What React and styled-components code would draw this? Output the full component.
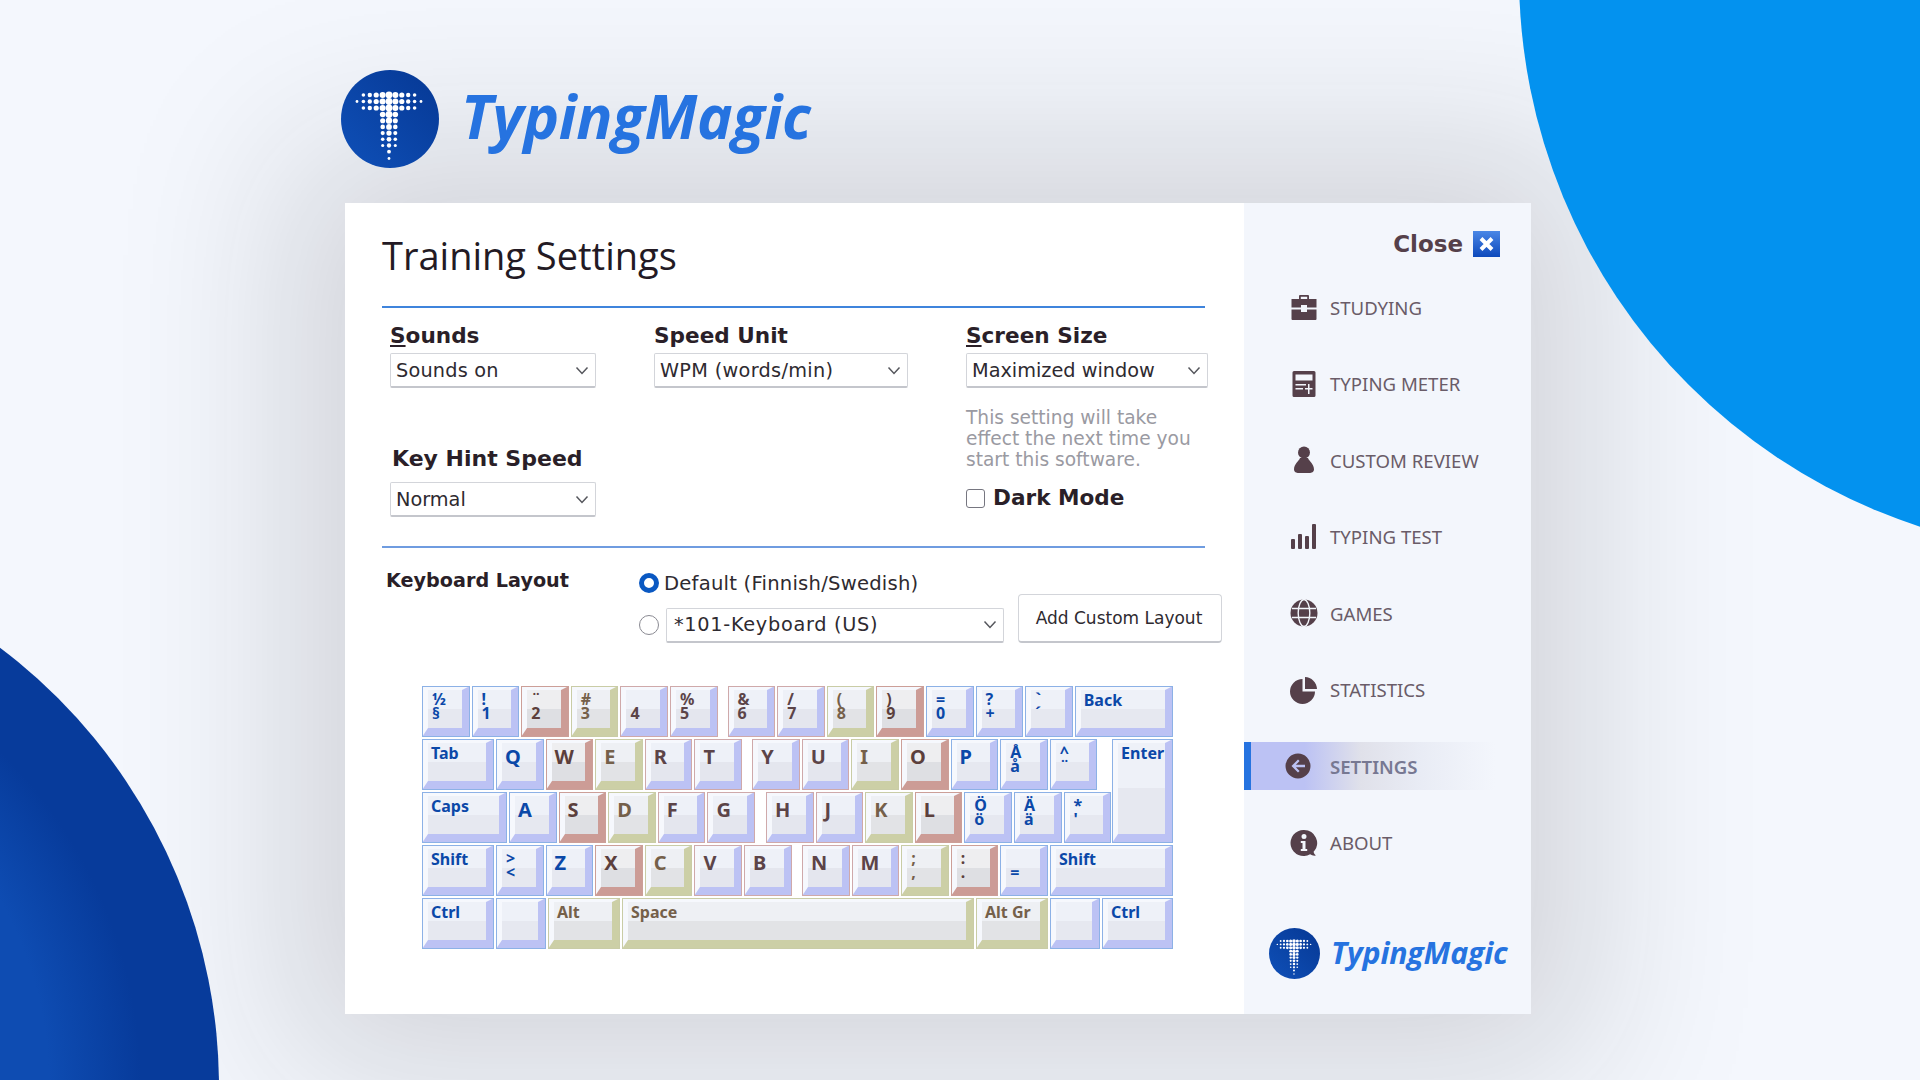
import React from 'react';
import styled, { createGlobalStyle } from 'styled-components';

const GlobalStyle = createGlobalStyle`
  html, body {
    margin: 0;
    padding: 0;
    width: 1920px;
    height: 1080px;
    overflow: hidden;
    background: #f4f7fd;
    font-family: "DejaVu Sans", "Liberation Sans", sans-serif;
  }
  * { box-sizing: border-box; }
`;

const Page = styled.div`
  position: relative;
  width: 1920px;
  height: 1080px;
  overflow: hidden;
  padding: 70px 0 0 341px;
`;

const TopCircle = styled.div`
  position: absolute;
  left: 1519px;
  top: -605px;
  width: 1160px;
  height: 1160px;
  border-radius: 50%;
  background: #0392ef;
`;

const BottomCircle = styled.div`
  position: absolute;
  left: -881px;
  top: 537px;
  width: 1100px;
  height: 1100px;
  border-radius: 50%;
  background: radial-gradient(circle closest-side, #0e4cb2 0, #0e4cb2 380px, #073b9b 472px, #073b9b 100%);
`;

const Brand = styled.header`
  display: flex;
  align-items: center;
  gap: ${p => p.$gap}px;
`;

const BrandName = styled.span`
  margin-top: ${p => p.$lift}px;
  font-family: "Open Sans", "Noto Sans", sans-serif;
  font-style: italic;
  font-weight: 700;
  font-size: ${p => p.$size}px;
  letter-spacing: ${p => p.$spacing}px;
  line-height: 1;
  color: #2673e0;
`;

const Panel = styled.main`
  display: flex;
  width: 1186px;
  height: 811px;
  margin: 35px 0 0 4px;
  background: #fff;
  box-shadow: 0 0 160px 60px rgba(30, 25, 30, 0.15);
`;

const Content = styled.section`
  width: 899px;
  padding: 26px 0 0 37px;
`;

const Title = styled.h1`
  margin: 0;
  height: 77px;
  font-family: "Open Sans", "Noto Sans", sans-serif;
  font-weight: 400;
  font-size: 38px;
  line-height: 52px;
  color: #231a24;
`;

const Rule = styled.hr`
  width: 823px;
  height: 2px;
  margin: 0;
  border: 0;
  background: ${p => p.$color};
`;

const SettingsGrid = styled.div`
  display: grid;
  grid-template-columns: 264px 312px 241px;
  height: 238px;
  padding: 15px 0 0 8px;
`;

const Field = styled.div`
  display: flex;
  flex-direction: column;
  align-items: flex-start;
`;

const Label = styled.label`
  display: block;
  margin: ${p => p.$top || 0}px 0 ${p => (p.$bottom === undefined ? 4 : p.$bottom)}px ${p => p.$left || 0}px;
  font-weight: 700;
  font-size: ${p => p.$size || 21.6}px;
  line-height: 26px;
  color: #2a1f28;
  u { text-underline-offset: 2px; text-decoration-thickness: 2px; }
`;

const SelectBox = styled.div`
  display: flex;
  align-items: center;
  justify-content: space-between;
  width: ${p => p.$w}px;
  height: 35px;
  padding: 0 6px 0 ${p => p.$pad || 5}px;
  background: #fff;
  border: 1px solid #d3d5da;
  border-bottom: 2px solid #c4c6cc;
  border-radius: 2px;
  font-size: 19.3px;
  letter-spacing: ${p => p.$spacing || 0}px;
  color: #2e2a30;
  white-space: nowrap;
`;

const Chevron = styled.svg`
  width: 14px;
  height: 9px;
  fill: none;
  stroke: #55565c;
  stroke-width: 1.5;
`;

const Hint = styled.p`
  width: 241px;
  margin: 19px 0 15px;
  font-size: 18.6px;
  line-height: 21px;
  color: #9a9aa2;
`;

const CheckRow = styled.div`
  display: flex;
  align-items: center;
  gap: 8px;
`;

const CheckBox = styled.span`
  width: 19px;
  height: 19px;
  background: #fff;
  border: 1.5px solid #767680;
  border-radius: 3px;
`;

const LayoutRow = styled.div`
  display: flex;
  align-items: flex-end;
  margin-top: 23px;
  padding-left: 4px;
`;

const LayoutLabelCol = styled.div`
  align-self: flex-start;
  width: 253px;
`;

const LayoutChoices = styled.div`
  display: flex;
  flex-direction: column;
  gap: 12px;
  width: 365px;
`;

const RadioRow = styled.div`
  display: flex;
  align-items: center;
  gap: ${p => p.$gap}px;
  height: ${p => p.$h}px;
  font-size: 19.6px;
  letter-spacing: 0.22px;
  color: #2e2a30;
`;

const Radio = styled.span`
  flex: none;
  width: 20px;
  height: 20px;
  border-radius: 50%;
  background: #fff;
  border: ${p => (p.$on ? '5.5px solid #0a58c2' : '1.5px solid #8a8a92')};
`;

const AddButton = styled.button`
  width: 204px;
  height: 49px;
  margin-left: 14px;
  padding: 0 2px 0 0;
  background: #fff;
  border: 1px solid #d3d5da;
  border-bottom: 2px solid #c4c6cc;
  border-radius: 4px;
  font-family: inherit;
  font-size: 17px;
  color: #2e2a30;
`;

const Keyboard = styled.div`
  display: flex;
  flex-direction: column;
  gap: 2px;
  margin: 43px 0 0 40px;
`;

const KeyRow = styled.div`
  display: flex;
  gap: 2px;
  height: 51px;
`;

const tones = {
  blue: { line: '#8cb1e6', side: '#bcc2f4', text: '#0b48a8', soft: '#eef1f8', low: '#e6e8f0' },
  mixed: { line: '#cfa9aa', side: '#bcc2f4', text: '#5c4448', soft: '#eef1f8', low: '#e4e6ee' },
  pink: { line: '#cc9f98', side: '#cc9c96', text: '#5c3f3c', soft: '#eeeef0', low: '#dedfe3' },
  olive: { line: '#c9cca6', side: '#cccfa6', text: '#75604a', soft: '#eef0f4', low: '#e2e3e6' },
};

const Key = styled.div`
  flex: none;
  width: ${p => p.$w || 47.6}px;
  height: ${p => p.$h || 51}px;
  margin-left: ${p => p.$skip || 0}px;
  padding: 0 0 0 3px;
  border-style: solid;
  border-width: 4px 8px 9px 6px;
  border-color: #f6f8fd ${p => tones[p.$tone].side} ${p => tones[p.$tone].side} #f6f8fd;
  outline: 1px solid ${p => tones[p.$tone].line};
  outline-offset: -1px;
  background: linear-gradient(${p => tones[p.$tone].soft} 50%, ${p => tones[p.$tone].low} 50%);
  color: ${p => tones[p.$tone].text};
  font-family: "Noto Sans", "Open Sans", sans-serif;
  font-weight: 700;
  overflow: hidden;
`;

const KeyLetter = styled.div`
  margin-top: 1px;
  font-size: 20px;
  line-height: 26px;
`;

const KeyWord = styled.div`
  margin-top: -1px;
  font-size: 16px;
  line-height: 22px;
  white-space: nowrap;
`;

const KeyPair = styled.div`
  margin: 2px 0 0 1px;
  font-size: 16px;
  line-height: 14px;
  span { display: block; height: 14px; }
`;

const Sidebar = styled.aside`
  display: flex;
  flex-direction: column;
  width: 287px;
  background: #f3f6fc;
`;

const CloseRow = styled.div`
  display: flex;
  align-items: center;
  justify-content: flex-end;
  gap: 10px;
  padding: 28px 31px 0 0;
  font-weight: 700;
  font-size: 23px;
  line-height: 26px;
  color: #55404a;
`;

const CloseIcon = styled.svg`
  width: 27px;
  height: 26px;
`;

const Menu = styled.nav`
  display: flex;
  flex-direction: column;
  gap: 28.5px;
  margin-top: 26px;
`;

const MenuItem = styled.div`
  display: flex;
  align-items: center;
  gap: 12px;
  width: 251px;
  height: 48px;
  padding-left: ${p => (p.$active ? 39 : 46)}px;
  border-left: ${p => (p.$active ? '7px solid #2673e0' : '0')};
  background: ${p => (p.$active
    ? 'linear-gradient(90deg, #bcc2f4 0, #bcc2f4 22%, #e0e1ea 45%, #e9ecf5 70%, #f3f6fc 100%)'
    : 'transparent')};
  font-family: "Noto Sans", "Open Sans", sans-serif;
  font-size: 18.6px;
  font-weight: ${p => (p.$active ? 600 : 400)};
  color: ${p => (p.$active ? '#777892' : '#6a5c68')};
`;

const IconSlot = styled.svg`
  flex: none;
  width: 28px;
  height: 28px;
  fill: #55404a;
  transform: translateX(${p => p.$shift || 0}px);
`;

const SideBrand = styled.div`
  margin: auto 0 35px 25px;
`;

const LogoDisc = styled.svg`
  flex: none;
  display: block;
  width: ${p => p.$size}px;
  height: ${p => p.$size}px;
`;

// dots of the T in the logo, bigger towards the middle
const logoDots = (() => {
  const dots = [];
  [[25, 8], [31.5, 10], [38, 8]].forEach(([y, half]) => {
    for (let i = -half; i <= half; i += 2) {
      dots.push({ x: 48 + i * 3.2, y, r: 3.4 - (Math.abs(i) / 10) * 2 });
    }
  });
  for (let row = 0; row < 7; row++) {
    const y = 44.5 + row * 6.2;
    [41.7, 48, 54.3].forEach((x, col) => {
      const side = col !== 1;
      if (side && row > 5) return;
      dots.push({ x, y, r: (side ? 2.8 : 3.4) - row * 0.25 });
    });
  }
  dots.push({ x: 48, y: 88.5, r: 1.4 });
  return dots;
})();

const Logo = ({ size }) => (
  <LogoDisc $size={size} viewBox="0 0 98 98">
    <defs>
      <linearGradient id="logoFill" x1="0" y1="1" x2="1" y2="0">
        <stop offset="0" stopColor="#0f50b8" />
        <stop offset="1" stopColor="#063894" />
      </linearGradient>
    </defs>
    <circle cx="49" cy="49" r="49" fill="url(#logoFill)" />
    {logoDots.map((d, i) => <circle key={i} cx={d.x} cy={d.y} r={d.r} fill="#fff" />)}
  </LogoDisc>
);

const Caret = () => (
  <Chevron viewBox="0 0 14 9"><path d="M1.5 1.5 7 7.5l5.5-6" /></Chevron>
);

const Select = ({ w, spacing, pad, children }) => (
  <SelectBox $w={w} $spacing={spacing} $pad={pad}><span>{children}</span><Caret /></SelectBox>
);

const icons = {
  studying: (
    <>
      <path d="M10 2h8a1 1 0 0 1 1 1v3h-1.800V3.800h-6.400V6H9V3a1 1 0 0 1 1-1Z" />
      <path d="M1.500 6h25v8.500h-9.500v-2.500h-6v2.500H1.500Z" />
      <path d="M1.500 16.500H11v2.500h6v-2.500h9.500V26a1 1 0 0 1-1 1h-23a1 1 0 0 1-1-1Z" />
    </>
  ),
  meter: (
    <path fillRule="evenodd" d="M4 1h20a1.500 1.500 0 0 1 1.500 1.500v23A1.500 1.500 0 0 1 24 27H4a1.500 1.500 0 0 1-1.500-1.500v-23A1.500 1.500 0 0 1 4 1ZM5.500 4.500v6h17v-6ZM5.500 14v1.500H16V14ZM18 14v4h-3v1.500h3V24h1.500v-4.500h3V18h-3v-4ZM5.500 18v1.500H13V18Z" />
  ),
  review: (
    <>
      <circle cx="14" cy="6.500" r="6" />
      <path d="M10 12h8c1 3 6 6 6 11.500 0 2.500-2.500 3.500-4.500 3.500h-11C6.500 27 4 26 4 23.500 4 18 9 15 10 12Z" />
    </>
  ),
  test: (
    <>
      <rect x="1" y="16" width="4" height="10" rx="1" />
      <rect x="8" y="11" width="4" height="15" rx="1" />
      <rect x="15" y="13" width="4" height="13" rx="1" />
      <rect x="22" y="1" width="4" height="25" rx="1" />
    </>
  ),
  games: (
    <>
      <circle cx="14" cy="14" r="13.500" />
      <g fill="none" stroke="#f3f6fc" strokeWidth="1.400">
        <path d="M2 9.500h24M2 18.500h24" />
        <ellipse cx="14" cy="14" rx="5.800" ry="13.500" />
      </g>
    </>
  ),
  stats: (
    <>
      <path d="M12.500 3v12.500H25A12.500 12.500 0 1 1 12.500 3Z" />
      <path d="M15 1a12.500 12.500 0 0 1 12 12H15Z" />
    </>
  ),
  settings: (
    <path fillRule="evenodd" d="M14 1.500a12.500 12.500 0 1 1 0 25 12.500 12.500 0 0 1 0-25ZM14 7.500 7.500 14l6.500 6.500 1.600-1.600-3.700-3.700H21v-2.400h-9.100l3.700-3.700Z" />
  ),
  about: (
    <path fillRule="evenodd" d="M14 1a13 13 0 0 1 9.600 21.800c.3 1.600 1.200 2.900 2.400 3.700-2.200.4-4.300-.1-5.900-1.300A13 13 0 1 1 14 1ZM14 5a2.500 2.500 0 1 0 0 5 2.500 2.500 0 0 0 0-5ZM10.800 12v2h1.700v6h-1.700v2h6.400v-2h-1.700v-8Z" />
  ),
};

const menu = [
  { id: 'studying', label: 'STUDYING' },
  { id: 'meter', label: 'TYPING METER' },
  { id: 'review', label: 'CUSTOM REVIEW' },
  { id: 'test', label: 'TYPING TEST' },
  { id: 'games', label: 'GAMES' },
  { id: 'stats', label: 'STATISTICS' },
  { id: 'settings', label: 'SETTINGS', active: true, shift: -6 },
  { id: 'about', label: 'ABOUT' },
];

const k = (tone, legend, opts) => ({ tone, legend, ...opts });
const pair = (top, bottom) => ({ top, bottom });
const word = text => ({ word: text });

const keyRows = [
  [
    k('blue', pair('½', '§')), k('blue', pair('!', '1')), k('pink', pair('¨', '2')), k('olive', pair('#', '3')),
    k('mixed', pair('', '4')), k('mixed', pair('%', '5')),
    k('mixed', pair('&', '6'), { skip: 8 }), k('mixed', pair('/', '7')), k('olive', pair('(', '8')), k('pink', pair(')', '9')),
    k('blue', pair('=', '0')), k('blue', pair('?', '+')), k('blue', pair('`', '´')), k('blue', word('Back'), { w: 98.2 }),
  ],
  [
    k('blue', word('Tab'), { w: 72 }), k('blue', 'Q'), k('pink', 'W'), k('olive', 'E'), k('mixed', 'R'), k('mixed', 'T'),
    k('mixed', 'Y', { skip: 8.2 }), k('mixed', 'U'), k('olive', 'I'), k('pink', 'O'), k('blue', 'P'),
    k('blue', pair('Å', 'å')), k('blue', pair('^', '¨')),
    k('blue', word('Enter'), { w: 61, h: 104, skip: 12.8 }),
  ],
  [
    k('blue', word('Caps'), { w: 85 }), k('blue', 'A'), k('pink', 'S'), k('olive', 'D'), k('mixed', 'F'), k('mixed', 'G'),
    k('mixed', 'H', { skip: 9 }), k('mixed', 'J'), k('olive', 'K'), k('pink', 'L'),
    k('blue', pair('Ö', 'ö')), k('blue', pair('Ä', 'ä')), k('blue', pair('*', "'")),
  ],
  [
    k('blue', word('Shift'), { w: 72 }), k('blue', pair('>', '<')), k('blue', 'Z'), k('pink', 'X'), k('olive', 'C'), k('mixed', 'V'), k('mixed', 'B'),
    k('mixed', 'N', { skip: 8.4 }), k('mixed', 'M'), k('olive', pair(';', ',')), k('pink', pair(':', '.')), k('blue', pair('', '=')),
    k('blue', word('Shift'), { w: 123 }),
  ],
  [
    k('blue', word('Ctrl'), { w: 72 }), k('blue', word(''), { w: 50 }), k('olive', word('Alt'), { w: 72 }),
    k('olive', word('Space'), { w: 352 }), k('olive', word('Alt Gr'), { w: 72 }), k('blue', word(''), { w: 50 }),
    k('blue', word('Ctrl'), { w: 71 }),
  ],
];

const KeyCap = ({ item }) => {
  const { legend, tone, w, h, skip } = item;
  return (
    <Key $tone={tone} $w={w} $h={h} $skip={skip}>
      {typeof legend === 'string' && <KeyLetter>{legend}</KeyLetter>}
      {legend.word !== undefined && <KeyWord>{legend.word}</KeyWord>}
      {legend.bottom !== undefined && (
        <KeyPair><span>{legend.top}</span><span>{legend.bottom}</span></KeyPair>
      )}
    </Key>
  );
};

export default function App() {
  return (
    <Page>
      <GlobalStyle />
      <Brand $gap={22}>
        <Logo size={98} />
        <BrandName $size={60} $spacing={-0.3} $lift={-6}>TypingMagic</BrandName>
      </Brand>

      <Panel>
        <Content>
          <Title>Training Settings</Title>
          <Rule $color="#3f84dc" />

          <SettingsGrid>
            <Field>
              <Label><u>S</u>ounds</Label>
              <Select w={206} spacing={0.2}>Sounds on</Select>
              <Label $size={22} $top={58} $bottom={10} $left={2}>Key Hint Speed</Label>
              <Select w={206}>Normal</Select>
            </Field>
            <Field>
              <Label>Speed Unit</Label>
              <Select w={254} spacing={0.3}>WPM (words/min)</Select>
            </Field>
            <Field>
              <Label><u>S</u>creen Size</Label>
              <Select w={242}>Maximized window</Select>
              <Hint>This setting will take<br />effect the next time you<br />start this software.</Hint>
              <CheckRow>
                <CheckBox />
                <Label $bottom={0} $size={21.6}>Dark Mode</Label>
              </CheckRow>
            </Field>
          </SettingsGrid>

          <Rule $color="#6f9ce0" />

          <LayoutRow>
            <LayoutLabelCol>
              <Label $size={19.2} $bottom={0} $top={-3}>Keyboard Layout</Label>
            </LayoutLabelCol>
            <LayoutChoices>
              <RadioRow $gap={5} $h={24}>
                <Radio $on />
                <span>Default (Finnish/Swedish)</span>
              </RadioRow>
              <RadioRow $gap={7} $h={36}>
                <Radio />
                <Select w={338} spacing={0.7} pad={7}>*101-Keyboard (US)</Select>
              </RadioRow>
            </LayoutChoices>
            <AddButton>Add Custom Layout</AddButton>
          </LayoutRow>

          <Keyboard>
            {keyRows.map((row, r) => (
              <KeyRow key={r}>
                {row.map((item, i) => <KeyCap key={i} item={item} />)}
              </KeyRow>
            ))}
          </Keyboard>
        </Content>

        <Sidebar>
          <CloseRow>
            Close
            <CloseIcon viewBox="0 0 27 26">
              <defs>
                <linearGradient id="closeFill" x1="0" y1="0" x2="0" y2="1">
                  <stop offset="0" stopColor="#4a87e6" />
                  <stop offset="1" stopColor="#0d49bc" />
                </linearGradient>
              </defs>
              <rect width="27" height="26" fill="url(#closeFill)" />
              <path d="M8 7.500 19 18.500M19 7.500 8 18.500" stroke="#fff" strokeWidth="4" />
            </CloseIcon>
          </CloseRow>
          <Menu>
            {menu.map(item => (
              <MenuItem key={item.id} $active={item.active}>
                <IconSlot viewBox="0 0 28 28" $shift={item.shift}>{icons[item.id]}</IconSlot>
                <span>{item.label}</span>
              </MenuItem>
            ))}
          </Menu>
          <SideBrand>
            <Brand $gap={11}>
              <Logo size={51} />
              <BrandName $size={30.4} $spacing={-0.2} $lift={0}>TypingMagic</BrandName>
            </Brand>
          </SideBrand>
        </Sidebar>
      </Panel>

      <TopCircle />
      <BottomCircle />
    </Page>
  );
}
